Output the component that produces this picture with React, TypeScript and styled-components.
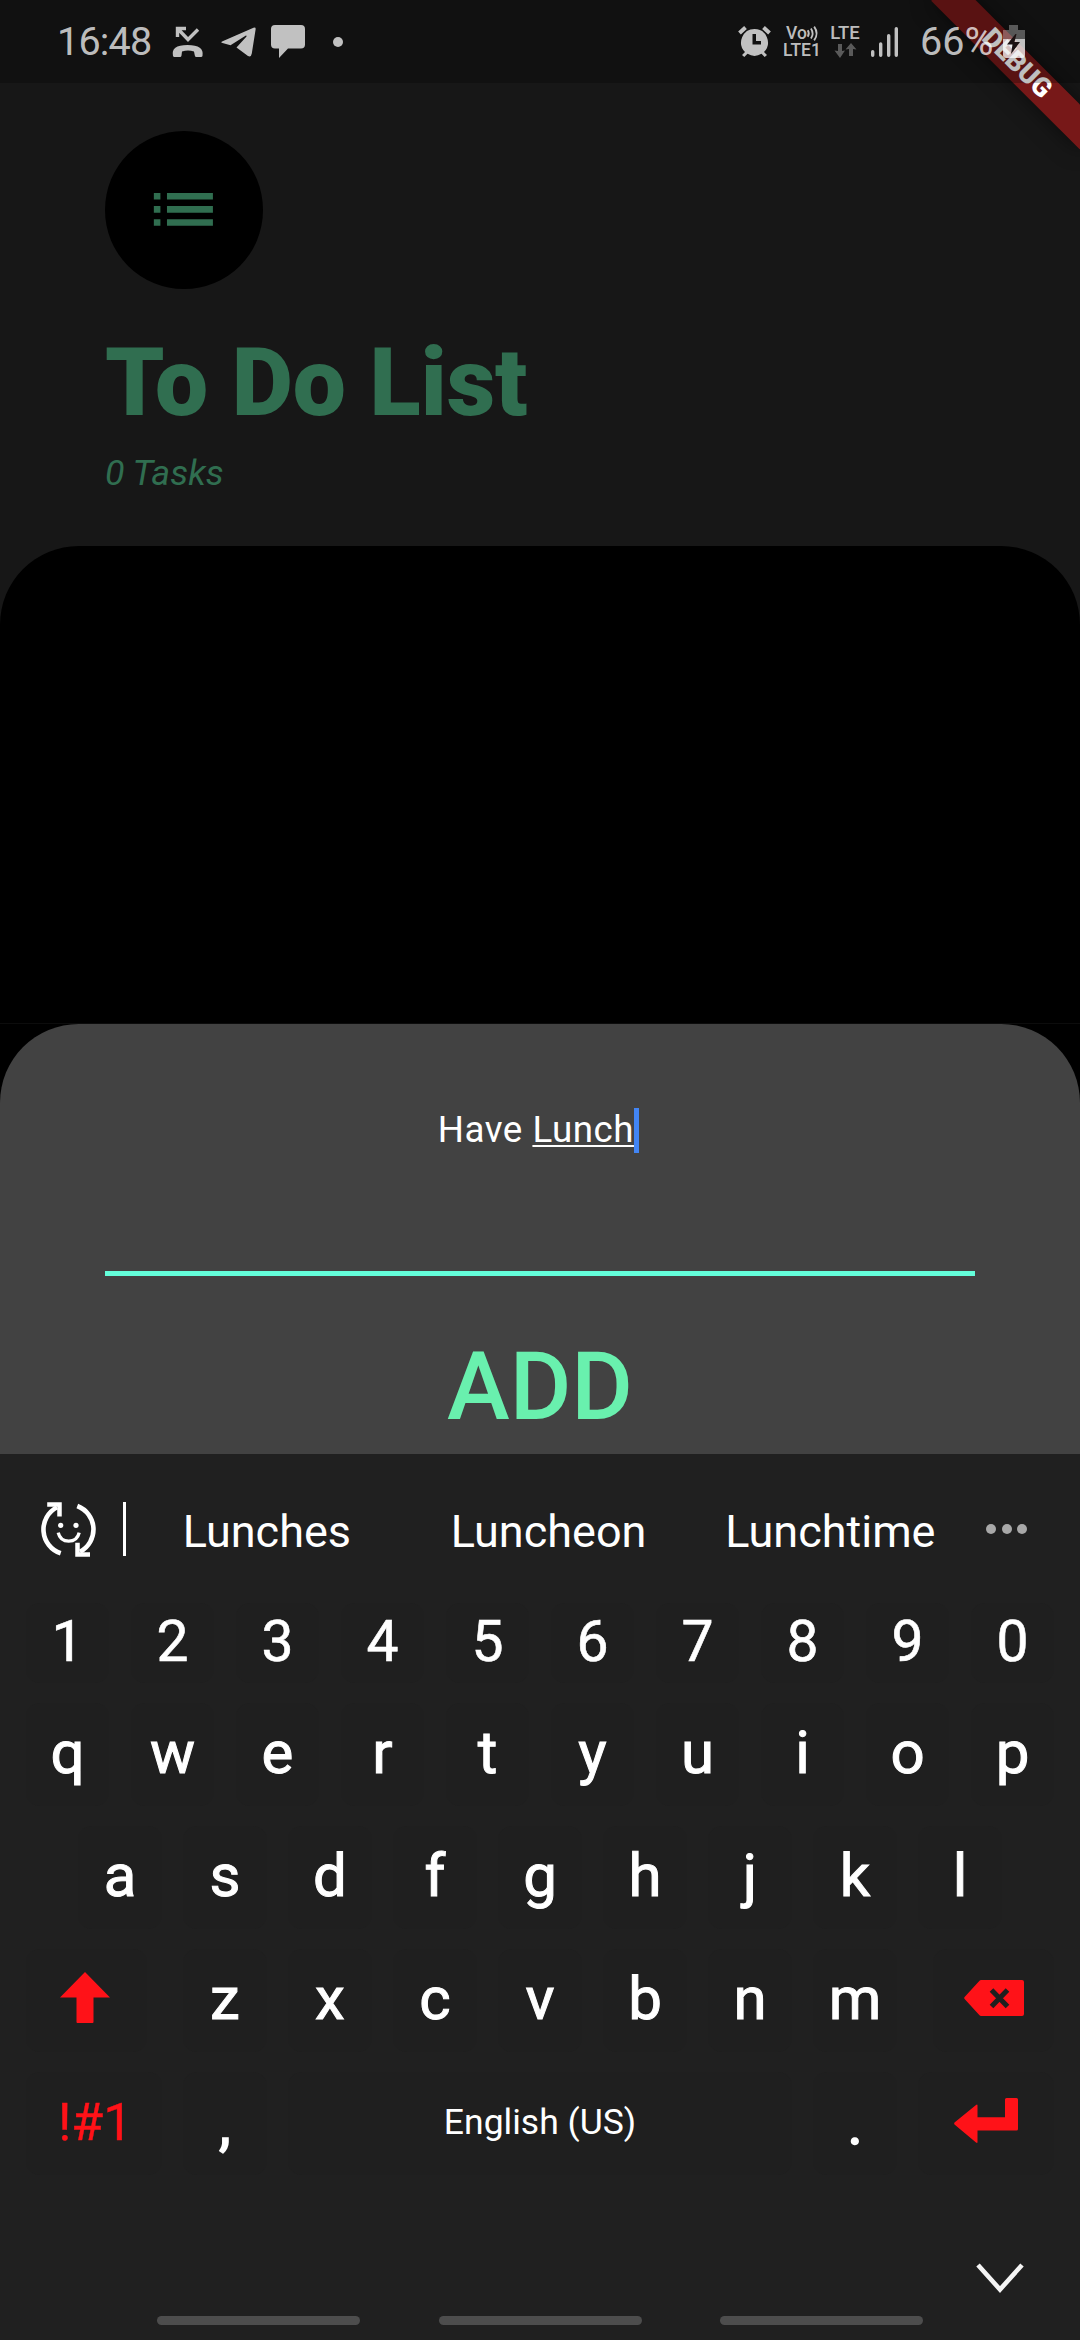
import React from "react";
import styled, { createGlobalStyle, css } from "styled-components";

const GlobalStyle = createGlobalStyle`
  html, body { margin: 0; padding: 0; background: #000; }
  * { box-sizing: border-box; }
`;

const Screen = styled.div`
  position: relative;
  width: 1080px;
  height: 2340px;
  overflow: hidden;
  display: flex;
  flex-direction: column;
  background: #171717;
  font-family: Roboto, "Noto Sans", sans-serif;
`;

/* ---------- Status bar ---------- */

const StatusBar = styled.header`
  position: absolute;
  inset: 0 0 auto 0;
  height: 83px;
  padding: 0 55px 0 57px;
  display: flex;
  justify-content: space-between;
  align-items: center;
  background: rgba(0, 0, 0, 0.25);
`;

const StatusGroup = styled.div`
  height: 82px;
  display: flex;
  align-items: center;
  color: rgba(255, 255, 255, 0.74);
  svg { display: block; overflow: visible; flex: none; }
`;

const StatusText = styled.span<{ $width: number; $spacing?: number }>`
  width: ${(p) => p.$width}px;
  font-size: 39.5px;
  line-height: 85px;
  letter-spacing: ${(p) => p.$spacing ?? 0}px;
  white-space: nowrap;
`;

const LteStack = styled.div<{ $width: number; $gap: number; $size: number }>`
  width: ${(p) => p.$width}px;
  height: 34px;
  margin-right: ${(p) => p.$gap}px;
  display: flex;
  flex-direction: column;
  align-items: center;
  font-size: ${(p) => p.$size}px;
  font-weight: 500;
  line-height: 17px;
  white-space: nowrap;
`;

const VoLine = styled.span`
  display: flex;
  align-items: center;
`;

const Banner = styled.div`
  position: absolute;
  top: 73.5px;
  left: 975px;
  width: 210px;
  height: 31.5px;
  transform-origin: 105px -73.5px;
  transform: rotate(45deg);
  background: #771818;
  box-shadow: 0 0 21px rgba(0, 0, 0, 0.5);
  color: #fff;
  font-size: 26.8px;
  font-weight: 900;
  line-height: 31.5px;
  text-align: center;
`;

/* ---------- App content ---------- */

const Header = styled.section`
  height: 546px;
  padding: 131px 105px 0;
  color: #306e50;
`;

const Avatar = styled.div`
  width: 157.5px;
  height: 157.5px;
  border-radius: 50%;
  background: #000;
  display: flex;
  align-items: center;
  justify-content: center;
`;

const Title = styled.h1`
  margin: 38px 0 0;
  font-size: 94.5px;
  line-height: 111px;
  font-weight: 900;
  white-space: nowrap;
`;

const Subtitle = styled.p`
  margin: 14px 0 0;
  font-size: 35.8px;
  line-height: 43px;
  font-style: italic;
`;

const TaskArea = styled.main`
  height: 478px;
  background: #000;
  border-radius: 78.75px 78.75px 0 0;
  border-bottom: 1px solid #0c0c0c;
`;

const SheetBackdrop = styled.div`
  background: #000;
`;

const Sheet = styled.section`
  height: 430px;
  padding: 78.75px 105px 0;
  border-radius: 78.75px 78.75px 0 0;
  background: #424242;
  display: flex;
  flex-direction: column;
`;

const Field = styled.div`
  height: 173px;
  padding-right: 3px;
  border-bottom: 5.25px solid #64ffda;
  display: flex;
  justify-content: center;
  color: #fff;
  font-size: 36.75px;
  line-height: 54px;
  letter-spacing: 0.5px;
  white-space: pre;
`;

const Composing = styled.span`
  text-decoration: underline;
  text-decoration-thickness: 2px;
  text-underline-offset: 3px;
  text-decoration-skip-ink: none;
`;

const Caret = styled.span`
  width: 5.25px;
  height: 45px;
  margin-top: 5.25px;
  background: #4285f4;
`;

const AddButton = styled.button`
  margin: 55px 0 0;
  padding: 0;
  border: 0;
  background: none;
  font: 500 94.5px/111px Roboto, sans-serif;
  color: #69f0ae;
`;

/* ---------- Keyboard ---------- */

const Keyboard = styled.section`
  flex: 1;
  background: #202020;
  display: flex;
  flex-direction: column;
  color: #fff;
  svg { display: block; overflow: visible; }
`;

const Suggestions = styled.div`
  height: 149px;
  padding: 48px 53px 0 41px;
  display: flex;
  align-items: flex-start;
`;

const Divider = styled.div`
  width: 3px;
  height: 54px;
  margin-left: 27px;
  background: #fff;
`;

const Suggestion = styled.div`
  width: 282px;
  padding-top: 3px;
  text-align: center;
  font-size: 45px;
  line-height: 54px;
`;

const More = styled.div`
  display: flex;
  gap: 5.4px;
  margin: 22px 0 0 15px;
`;

const Dot = styled.span`
  width: 10px;
  height: 10px;
  border-radius: 50%;
  background: #a8a8a8;
`;

const Keys = styled.div`
  display: flex;
  flex-direction: column;
  gap: 20.5px;
  padding: 0 25.75px;
`;

const Row = styled.div<{ $inset?: number }>`
  display: flex;
  justify-content: space-between;
  padding: 0 ${(p) => p.$inset ?? 0}px;
`;

const LetterGroup = styled(Row)`
  width: 713.5px;
`;

type KeyKind = "digit" | "letter" | "symbol" | "space" | "mark";

const kinds = {
  digit: css`height: 79.5px; font-size: 57px; line-height: 77px; -webkit-text-stroke: 0.6px currentColor;`,
  letter: css`font-size: 60px; line-height: 99px; -webkit-text-stroke: 1px currentColor;`,
  symbol: css`font-size: 52px; line-height: 102px; color: #ff1218; padding-left: 3px; -webkit-text-stroke: 0.4px currentColor;`,
  space: css`font-size: 35.5px; line-height: 101px;`,
  mark: css`font-size: 60px; line-height: 104px; -webkit-text-stroke: 1.4px currentColor;`,
};

const Key = styled.div<{ $w?: number; $kind: KeyKind }>`
  width: ${(p) => p.$w ?? 83.5}px;
  height: 102.5px;
  border-radius: 14px;
  background: #1f1f1f;
  display: flex;
  justify-content: center;
  white-space: nowrap;
  ${(p) => kinds[p.$kind]}
`;

const IconKey = styled(Key)<{ $nudge?: number }>`
  align-items: center;
  padding: 0 ${(p) => p.$nudge ?? 0}px 5px 0;
`;

const KeyboardFooter = styled.div`
  flex: 1;
  display: flex;
  flex-direction: column;
  align-items: flex-end;
  padding: 88px 56px 0 0;
`;

const NavBars = styled.div`
  align-self: flex-start;
  display: flex;
  gap: 78.5px;
  margin: 23px 0 0 157px;
`;

const NavBar = styled.span`
  width: 203px;
  height: 9.5px;
  border-radius: 5px;
  background: #4d4d4d;
`;

/* ---------- Icons ---------- */

const MissedCallSvg = styled.svg`margin-right: 17px;`;
const TelegramSvg = styled.svg`margin-right: 15px;`;
const ChatSvg = styled.svg`margin-right: 28px;`;
const AlarmSvg = styled.svg`margin-right: 12px;`;
const SignalSvg = styled.svg`margin-right: 22px;`;
const DataArrowsSvg = styled.svg`margin-top: 1px;`;

const MissedCall = () => (
  <MissedCallSvg width="32" height="32" viewBox="0 0 32 32">
    <path d="M1 30Q-1.500 19 15.500 19T30.500 30q-.3 1-1.500 1h-4.500q-1.500 0-1.700-1.500L22 25.500q-6-2-12 0l-.5 4Q9.300 31 8 31H2.500Q1.300 31 1 30z" fill="currentColor" />
    <path d="M5.500 11V2.500H14M6 3l10 10.500L26 3.500" fill="none" stroke="currentColor" strokeWidth="3.400" />
  </MissedCallSvg>
);

const Telegram = () => (
  <TelegramSvg width="35" height="30" viewBox="0 0 35 30">
    <path d="M1 14.500 32.500.7Q35-.2 34.600 2.500L30.800 26.500q-.7 4-3.800 2.500L15.500 20.500 25.500 9.500q.3-1.200-1-.8L9.500 18.300 1.500 16Q-.6 15.300 1 14.500z" fill="currentColor" />
  </TelegramSvg>
);

const Chat = () => (
  <ChatSvg width="34" height="33" viewBox="0 0 34 33">
    <path d="M4 0h26q4 0 4 4v15.500q0 4-4 4H17L8 33v-9.500H4q-4 0-4-4V4q0-4 4-4z" fill="currentColor" />
  </ChatSvg>
);

const Bullet = () => (
  <svg width="10" height="10" viewBox="0 0 10 10">
    <circle cx="5" cy="5" r="5" fill="currentColor" />
  </svg>
);

const Alarm = () => (
  <AlarmSvg width="33" height="31" viewBox="0 0 33 31">
    <path d="M16.500 3a13.500 13.500 0 0 1 9.500 23l3 3-2.300 2-3.200-3.200a13.500 13.500 0 0 1-14 0L6.300 31 4 29l3-3A13.500 13.500 0 0 1 16.500 3zM14.500 8v10.500H23V15h-5V8z" fill="currentColor" fillRule="evenodd" />
    <path d="M1.500 7 7.500 1.500M31.500 7 25.500 1.500" stroke="currentColor" strokeWidth="4" />
  </AlarmSvg>
);

const VoWaves = () => (
  <svg width="11" height="17" viewBox="0 0 12 17" fill="none" stroke="currentColor" strokeWidth="2">
    <path d="M.8 5q2.400 3.500 0 7M4.300 3q3.600 5.500 0 11M7.800 1q5.400 7.500 0 15" />
  </svg>
);

const DataArrows = () => (
  <DataArrowsSvg width="23" height="16" viewBox="0 0 23 16" opacity="0.42">
    <path d="M4 1h4v7l3-.5L6 15 .5 7.500 4 8zM15 13h4V6l3.500.5L17 0l-5.500 6.500L15 6z" fill="currentColor" />
  </DataArrowsSvg>
);

const Signal = () => (
  <SignalSvg width="27" height="30" viewBox="0 0 27 30">
    <path d="M1.700 24.700v3.600M9.700 17v11.300M17.700 8.800v19.500M25.300 1.700v26.600" stroke="currentColor" strokeWidth="3.400" strokeLinecap="round" />
  </SignalSvg>
);

const Battery = () => (
  <svg width="22" height="33" viewBox="0 0 22 33">
    <path d="M6 0h9v5h7v9H0V5h6z" fill="currentColor" opacity="0.42" />
    <path d="M0 14h22v16q0 3-3 3H3q-3 0-3-3z" fill="currentColor" />
    <path d="M12.500 9 4 19.500h5.500L8 29l9-12h-5.500l2-8z" fill="#1c1112" />
  </svg>
);

const ListIcon = () => (
  <svg width="78.75" height="78.75" viewBox="0 0 24 24" fill="currentColor">
    <path d="M3 13h2v-2H3v2zm0 4h2v-2H3v2zm0-8h2V7H3v2zm4 4h14v-2H7v2zm0 4h14v-2H7v2zM7 7v2h14V7H7z" />
  </svg>
);

const EmojiCycle = () => (
  <svg width="55" height="55" viewBox="0 0 55 55" fill="none" stroke="#fff">
    <path d="M19.700 51.300A25.100 25.100 0 0 1 16 5.200M36.300 4A25.100 25.100 0 0 1 39 49.700" strokeWidth="4.600" />
    <path d="M6.200 2.600h12.300v11.900M49 52.400H36.500V40.700" strokeWidth="4.500" />
    <path d="M17.200 30.700q2 8.500 10.500 8.500t10.500-8.500" strokeWidth="3.300" />
    <circle cx="19.700" cy="23.300" r="2.600" fill="#fff" stroke="none" />
    <circle cx="35" cy="23.300" r="2.600" fill="#fff" stroke="none" />
  </svg>
);

const ShiftIcon = () => (
  <svg width="50" height="51" viewBox="0 0 50 51">
    <path d="M25 0 50 25.500H33.500V50q0 1-1 1h-15q-1 0-1-1V25.500H0z" fill="#ff1218" />
  </svg>
);

const BackspaceIcon = () => (
  <svg width="60" height="36" viewBox="0 0 60 36">
    <path d="M17 0h41q2 0 2 2v32q0 2-2 2H17q-.8 0-1.500-.8L.6 19q-.8-1 0-2L15.500.8Q16.200 0 17 0z" fill="#ff1218" />
    <path d="M27.500 10 43.500 26.500M43.500 10 27.500 26.500" stroke="#1f1f1f" strokeWidth="5" />
  </svg>
);

const EnterIcon = () => (
  <svg width="64" height="45" viewBox="0 0 64 45">
    <path d="M52.500 0H62.500q1.500 0 1.500 1.500V31q0 1.500-1.500 1.500H23.500V44q0 1.500-1.500.5L.5 26.500q-.8-1 0-2L22 7q1.500-1 1.500.5V19.200H51V1.500Q51 0 52.500 0z" fill="#ff1218" />
  </svg>
);

const HideIcon = () => (
  <svg width="48" height="30" viewBox="0 0 48 30">
    <path d="M2 2 24 26.500 46 2" fill="none" stroke="#f5f5f5" strokeWidth="4.600" />
  </svg>
);

const row = (chars: string, kind: KeyKind) =>
  chars.split("").map((c) => (
    <Key key={c} $kind={kind}>
      {c}
    </Key>
  ));

export default function App() {
  return (
    <Screen>
      <GlobalStyle />
      <Header>
        <Avatar>
          <ListIcon />
        </Avatar>
        <Title>To Do List</Title>
        <Subtitle>0 Tasks</Subtitle>
      </Header>
      <TaskArea />
      <SheetBackdrop>
        <Sheet>
          <Field>
            <span>Have </span>
            <Composing>Lunch</Composing>
            <Caret />
          </Field>
          <AddButton>ADD</AddButton>
        </Sheet>
      </SheetBackdrop>

      <Keyboard>
        <Suggestions>
          <EmojiCycle />
          <Divider />
          {["Lunches", "Luncheon", "Lunchtime"].map((word) => (
            <Suggestion key={word}>{word}</Suggestion>
          ))}
          <More>
            <Dot />
            <Dot />
            <Dot />
          </More>
        </Suggestions>
        <Keys>
          <Row>{row("1234567890", "digit")}</Row>
          <Row>{row("qwertyuiop", "letter")}</Row>
          <Row $inset={52.5}>{row("asdfghjkl", "letter")}</Row>
          <Row>
            <IconKey $kind="letter" $w={121.5} $nudge={3}>
              <ShiftIcon />
            </IconKey>
            <LetterGroup>{row("zxcvbnm", "letter")}</LetterGroup>
            <IconKey $kind="letter" $w={121.5}>
              <BackspaceIcon />
            </IconKey>
          </Row>
          <Row>
            <Key $kind="symbol" $w={136}>!#1</Key>
            <Key $kind="mark">,</Key>
            <Key $kind="space" $w={504}>English (US)</Key>
            <Key $kind="mark">.</Key>
            <IconKey $kind="letter" $w={136}>
              <EnterIcon />
            </IconKey>
          </Row>
        </Keys>
        <KeyboardFooter>
          <HideIcon />
          <NavBars>
            <NavBar />
            <NavBar />
            <NavBar />
          </NavBars>
        </KeyboardFooter>
      </Keyboard>

      <Banner>DEBUG</Banner>
      <StatusBar>
        <StatusGroup>
          <StatusText $width={115} $spacing={-0.8}>16:48</StatusText>
          <MissedCall />
          <Telegram />
          <Chat />
          <Bullet />
        </StatusGroup>
        <StatusGroup>
          <Alarm />
          <LteStack $width={38} $gap={9} $size={17.5}>
            <VoLine>
              Vo
              <VoWaves />
            </VoLine>
            <span>LTE1</span>
          </LteStack>
          <LteStack $width={30} $gap={11} $size={18.5}>
            <span>LTE</span>
            <DataArrows />
          </LteStack>
          <Signal />
          <StatusText $width={83}>66%</StatusText>
          <Battery />
        </StatusGroup>
      </StatusBar>
    </Screen>
  );
}
